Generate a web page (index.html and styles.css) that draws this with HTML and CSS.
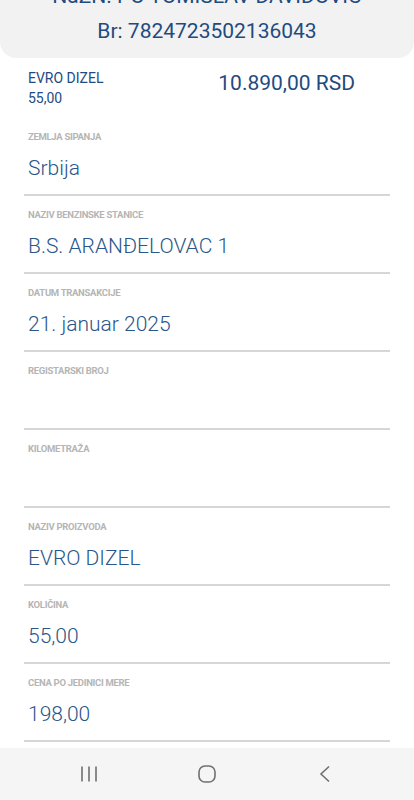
FILE: index.html
```html
<!DOCTYPE html>
<html lang="sr">

<head>
	<meta charset="utf-8" />
	<meta name="viewport" content="width=device-width, initial-scale=1.0" />
	<title>Transakcija</title>
	<link rel="stylesheet" href="styles.css">
</head>

<body>
	<header class="header">
		<div class="header-line">NaZN. PO TOMISLAV DAVIDOVIĆ</div>
		<div class="header-line">Br: 7824723502136043</div>
	</header>

	<section class="summary">
		<div>
			<div class="summary-name">EVRO DIZEL</div>
			<div class="summary-name">55,00</div>
		</div>
		<div class="summary-amount">10.890,00 RSD</div>
	</section>

	<div class="field">
		<div class="field-label">ZEMLJA SIPANJA</div>
		<div class="field-value">Srbija</div>
	</div>
	<div class="field">
		<div class="field-label">NAZIV BENZINSKE STANICE</div>
		<div class="field-value">B.S. ARANĐELOVAC 1</div>
	</div>
	<div class="field">
		<div class="field-label">DATUM TRANSAKCIJE</div>
		<div class="field-value">21. januar 2025</div>
	</div>
	<div class="field">
		<div class="field-label">REGISTARSKI BROJ</div>
		<div class="field-value"></div>
	</div>
	<div class="field">
		<div class="field-label">KILOMETRAŽA</div>
		<div class="field-value"></div>
	</div>
	<div class="field">
		<div class="field-label">NAZIV PROIZVODA</div>
		<div class="field-value">EVRO DIZEL</div>
	</div>
	<div class="field">
		<div class="field-label">KOLIČINA</div>
		<div class="field-value">55,00</div>
	</div>
	<div class="field">
		<div class="field-label">CENA PO JEDINICI MERE</div>
		<div class="field-value">198,00</div>
	</div>

	<nav class="navbar">
		<svg width="18" height="18" viewBox="0 0 18 18">
			<path d="M2 1.5v15M9 1.5v15M16 1.5v15" stroke="#707070" stroke-width="1.6" fill="none" />
		</svg>
		<svg width="18" height="18" viewBox="0 0 18 18">
			<rect x="1" y="1" width="16" height="16" rx="6" stroke="#707070" stroke-width="1.6" fill="none" />
		</svg>
		<svg width="18" height="18" viewBox="0 0 18 18">
			<path d="M13 1.5 5 9l8 7.5" stroke="#707070" stroke-width="1.6" fill="none" />
		</svg>
	</nav>
</body>

</html>
```

FILE: styles.css
```css
body {
	margin: 0;
	font-family: Roboto, "Liberation Sans", sans-serif;
	background: #ffffff;
	color: #1f4b80;
}

.header {
	margin-top: -21px;
	padding-bottom: 9px;
	background: #f2f2f2;
	border-radius: 0 0 16px 16px;
	text-align: center;
}

.header-line {
	font-size: 21px;
	line-height: 35px;
	color: #1f4b80;
}

.summary {
	display: flex;
	justify-content: space-between;
	padding: 10px 59px 10px 28px;
}

.summary-name {
	font-size: 14px;
	line-height: 20px;
}

.summary-amount {
	font-size: 21px;
	line-height: 28px;
	margin-top: 1px;
}

.field {
	margin: 0 24px;
	padding: 13px 4px 12px;
	border-bottom: 2px solid #d6d6d6;
}

.field-label {
	font-size: 9.5px;
	line-height: 12px;
	font-weight: 700;
	color: #b5b5b5;
	letter-spacing: -0.3px;
}

.field-value {
	margin-top: 11px;
	min-height: 28px;
	font-size: 21px;
	line-height: 28px;
	font-weight: 300;
	color: #2a5689;
}

.navbar {
	position: fixed;
	left: 0;
	right: 0;
	bottom: 0;
	height: 52px;
	display: flex;
	justify-content: space-around;
	align-items: center;
	padding: 0 30px;
	background: #f5f5f5;
}
```
